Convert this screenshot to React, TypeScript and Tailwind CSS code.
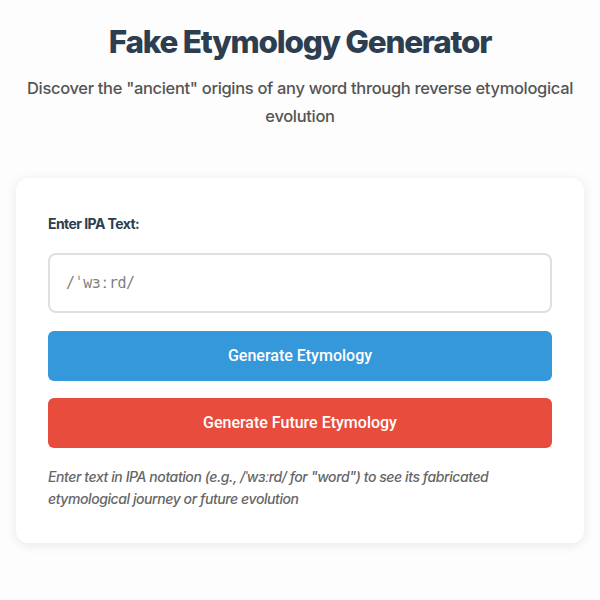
import React, { useState } from "react";

export default function App() {
  const [ipa, setIpa] = useState("");

  return (
    <div className="min-h-screen w-full bg-[#fdfdfd] font-['Inter','Liberation_Sans',sans-serif]">
      <div className="mx-auto flex w-full max-w-[600px] flex-col px-4 pt-[22px]">
        <header className="flex flex-col items-center text-center">
          <h1 className="text-[31.5px] font-extrabold leading-[40px] tracking-[-0.04em] text-[#2c3e50]">
            Fake Etymology Generator
          </h1>
          <p className="mt-[12px] px-1 text-[16.5px] font-medium leading-[28px] tracking-[-0.02em] text-[#555]">
            Discover the "ancient" origins of any word through reverse etymological evolution
          </p>
        </header>

        <main className="mt-[48px] rounded-xl bg-white px-8 pt-[36px] pb-[33px] shadow-[0_2px_12px_rgba(0,0,0,0.09)]">
          <label
            htmlFor="ipa"
            className="block text-[14px] font-bold leading-[20px] tracking-[-0.04em] text-[#2c3e50]"
          >
            Enter IPA Text:
          </label>
          <input
            id="ipa"
            type="text"
            value={ipa}
            onChange={(e) => setIpa(e.target.value)}
            placeholder="/ˈwɜːrd/"
            className="mt-[19px] block h-[60px] w-full rounded-lg border-2 border-[#e0e0e0] bg-white px-[16px] font-['DejaVu_Sans_Mono','Liberation_Mono',monospace] text-[15px] tracking-[-0.03em] text-[#333] placeholder-[#808080] outline-none focus:border-[#3498db]"
          />
          <div className="mt-[18px] flex flex-col gap-[17px]">
            <button className="h-[50px] w-full rounded-md bg-[#3498db] font-['Roboto','Liberation_Sans',sans-serif] text-[16px] font-medium text-white hover:bg-[#2d86c4]">
              Generate Etymology
            </button>
            <button className="h-[50px] w-full rounded-md bg-[#e74c3c] font-['Roboto','Liberation_Sans',sans-serif] text-[16px] font-medium text-white hover:bg-[#d44233]">
              Generate Future Etymology
            </button>
          </div>
          <p className="mt-[18px] text-[14px] font-medium italic leading-[22px] tracking-[-0.03em] text-[#666]">
            Enter text in IPA notation (e.g., /ˈwɜːrd/ for "word") to see its fabricated etymological journey or future evolution
          </p>
        </main>
      </div>
    </div>
  );
}
